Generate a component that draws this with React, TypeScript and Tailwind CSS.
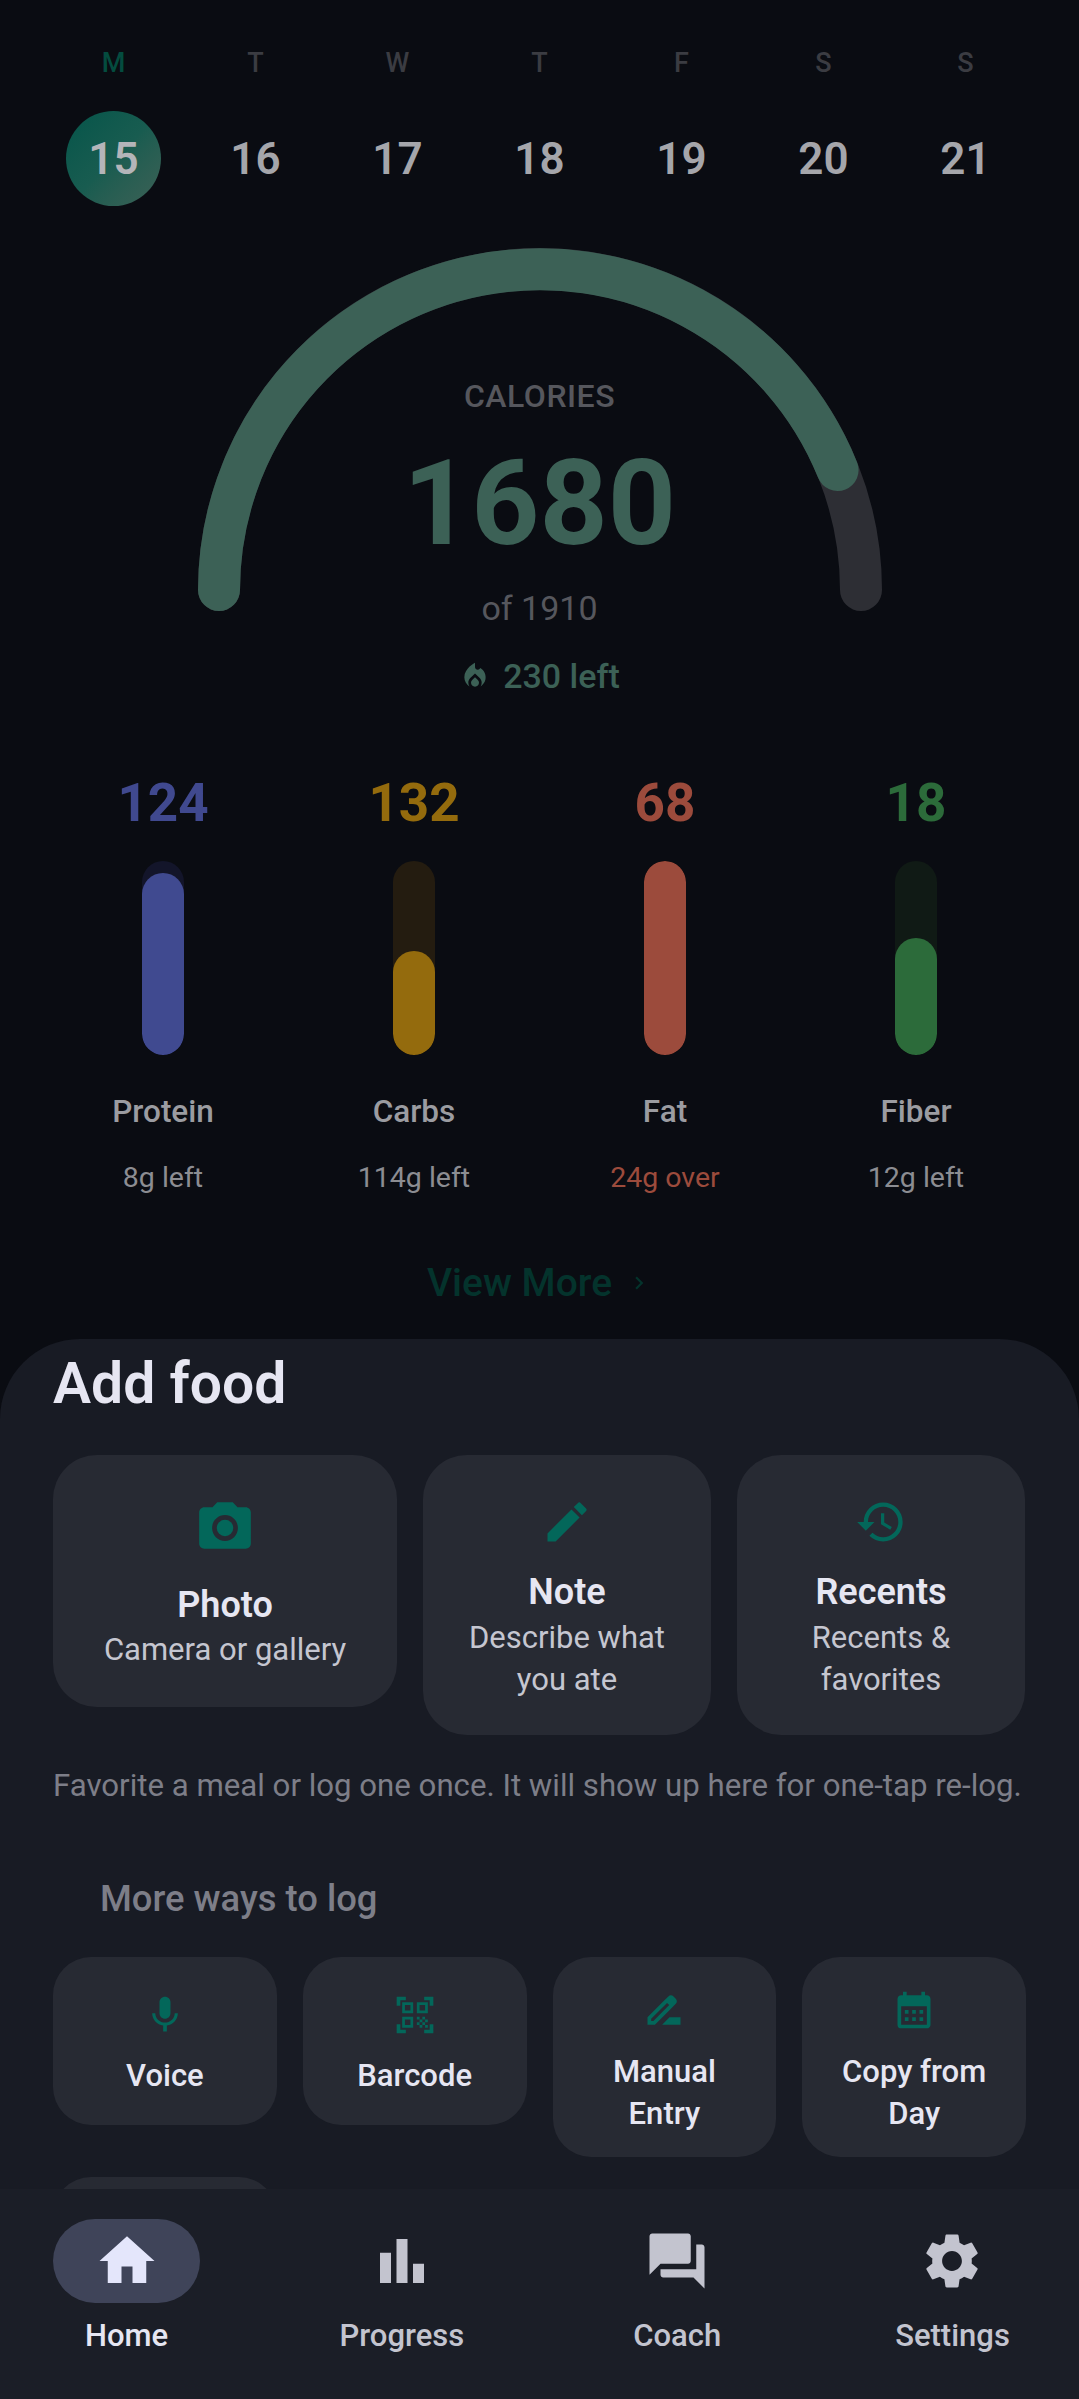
import {
  MdBarChart,
  MdCalendarMonth,
  MdCameraAlt,
  MdChevronRight,
  MdDriveFileRenameOutline,
  MdEdit,
  MdForum,
  MdHistory,
  MdHome,
  MdLocalFireDepartment,
  MdMic,
  MdQrCodeScanner,
  MdSettings,
} from "react-icons/md";

const days = [
  { letter: "M", date: 15 },
  { letter: "T", date: 16 },
  { letter: "W", date: 17 },
  { letter: "T", date: 18 },
  { letter: "F", date: 19 },
  { letter: "S", date: 20 },
  { letter: "S", date: 21 },
];

const macros = [
  { value: 124, label: "Protein", note: "8g left", text: "text-[#40498f]", fill: "bg-[#404a90]", track: "bg-[#13152a]", height: 182, over: false },
  { value: 132, label: "Carbs", note: "114g left", text: "text-[#946b0d]", fill: "bg-[#946b0d]", track: "bg-[#241c10]", height: 104, over: false },
  { value: 68, label: "Fat", note: "24g over", text: "text-[#9c4b3c]", fill: "bg-[#9c4b3c]", track: "bg-[#2a1613]", height: 194, over: true },
  { value: 18, label: "Fiber", note: "12g left", text: "text-[#2c6b3a]", fill: "bg-[#2c6b3a]", track: "bg-[#101a15]", height: 117, over: false },
];

const moreWays = [
  { label: "Voice", icon: MdMic },
  { label: "Barcode", icon: MdQrCodeScanner },
  { label: "Manual Entry", icon: MdDriveFileRenameOutline },
  { label: "Copy from Day", icon: MdCalendarMonth },
];

const navItems = [
  { label: "Home", icon: MdHome, active: true },
  { label: "Progress", icon: MdBarChart, active: false },
  { label: "Coach", icon: MdForum, active: false },
  { label: "Settings", icon: MdSettings, active: false },
];

function Gauge() {
  return (
    <svg width="726" height="384" viewBox="0 0 726 384" className="block">
      <path d="M 42 342 A 321 321 0 0 1 684 342" fill="none" stroke="#2d2e34" strokeWidth="42" strokeLinecap="round" />
      <path d="M 42 342 A 321 321 0 0 1 660.6 222" fill="none" stroke="#3c6156" strokeWidth="42" strokeLinecap="round" />
    </svg>
  );
}

export default function App() {
  return (
    <div className="w-[1079px] h-[2399px] overflow-hidden flex flex-col bg-[#0a0c12] font-['Roboto',sans-serif]">
      {/* Dimmed dashboard behind the sheet */}
      <div className="h-[1339px] shrink-0 flex flex-col items-center">
        <div className="w-[994px] mt-[43px] grid grid-cols-7">
          {days.map((d, i) => (
            <div key={d.date} className="flex flex-col items-center">
              <span className={`h-[40px] leading-[40px] text-[27px] font-medium ${i === 0 ? "text-[#044c3f]" : "text-[#3b3c42]"}`}>
                {d.letter}
              </span>
              <div
                className={`mt-[28px] w-[95px] h-[95px] rounded-full flex items-center justify-center text-[44px] font-semibold ${
                  i === 0 ? "bg-gradient-to-br from-[#03554a] via-[#185c50] to-[#3c6156] text-[#b4b5b9]" : "text-[#a5a6ab]"
                }`}
              >
                {d.date}
              </div>
            </div>
          ))}
        </div>

        <div className="relative mt-[42px] w-[726px] h-[384px]">
          <Gauge />
          <div className="absolute inset-x-0 top-[128px] flex flex-col items-center">
            <span className="text-[32px] leading-[40px] font-medium tracking-[0.5px] text-[#56575d]">CALORIES</span>
            <span className="mt-[23px] text-[119px] leading-[130px] font-bold text-[#3c6156]">1680</span>
            <span className="mt-[17px] text-[34px] leading-[44px] text-[#56575d]">of 1910</span>
          </div>
        </div>
        <div className="mt-[22px] flex items-center gap-[12px] text-[#3c6156]">
          <MdLocalFireDepartment size={32} />
          <span className="text-[34px] leading-[44px] font-medium">230 left</span>
        </div>

        <div className="mt-[76px] w-[1004px] grid grid-cols-4">
          {macros.map((m) => (
            <div key={m.label} className="flex flex-col items-center">
              <span className={`text-[53px] leading-[58px] font-bold ${m.text}`}>{m.value}</span>
              <div className={`mt-[29px] w-[42px] h-[194px] rounded-full flex flex-col justify-end overflow-hidden ${m.track}`}>
                <div className={`w-full rounded-full ${m.fill}`} style={{ height: m.height }} />
              </div>
              <span className="mt-[37px] text-[31.5px] leading-[40px] font-medium text-[#9b9ca1]">{m.label}</span>
              <span className={`mt-[26px] text-[28.5px] leading-[40px] ${m.over ? "text-[#9c4b3c]" : "text-[#8c8d92]"}`}>{m.note}</span>
            </div>
          ))}
        </div>

        <div className="mt-[60px] flex items-center gap-[14px] text-[#04332c]">
          <span className="text-[39px] leading-[50px] font-medium">View More</span>
          <MdChevronRight size={26} />
        </div>
      </div>

      {/* Add food sheet */}
      <div className="flex-1 min-h-0 overflow-hidden rounded-t-[80px] bg-[#181b24] px-[53px]">
        <h2 className="mt-[13px] text-[57px] leading-[64px] font-semibold text-[#e6e6f2]">Add food</h2>

        <div className="mt-[39px] flex gap-[26px] items-start">
          <div className="w-[344px] h-[252px] rounded-[44px] bg-[#272a33] flex flex-col items-center pt-[42px]">
            <MdCameraAlt size={62} className="text-[#03675a]" />
            <span className="mt-[24px] text-[36px] leading-[44px] font-semibold text-[#e6e6f2]">Photo</span>
            <span className="mt-[2px] text-[31px] leading-[42px] text-[#c5c6d0]">Camera or gallery</span>
          </div>
          <div className="w-[288px] h-[280px] rounded-[44px] bg-[#272a33] flex flex-col items-center pt-[41px] text-center">
            <MdEdit size={52} className="text-[#03675a]" />
            <span className="mt-[22px] text-[36px] leading-[44px] font-semibold text-[#e6e6f2]">Note</span>
            <span className="mt-[3px] text-[31px] leading-[42px] text-[#c5c6d0]">Describe what<br />you ate</span>
          </div>
          <div className="w-[288px] h-[280px] rounded-[44px] bg-[#272a33] flex flex-col items-center pt-[41px] text-center">
            <MdHistory size={52} className="text-[#03675a]" />
            <span className="mt-[22px] text-[36px] leading-[44px] font-semibold text-[#e6e6f2]">Recents</span>
            <span className="mt-[3px] text-[31px] leading-[42px] text-[#c5c6d0]">Recents &amp;<br />favorites</span>
          </div>
        </div>

        <p className="mt-[30px] text-[31.2px] leading-[42px] text-[#7d7e88] whitespace-nowrap">
          Favorite a meal or log one once. It will show up here for one-tap re-log.
        </p>

        <h3 className="mt-[70px] ml-[47px] text-[36.4px] leading-[44px] font-medium text-[#7d7e88]">More ways to log</h3>

        <div className="mt-[36px] grid grid-cols-4 gap-x-[26px] gap-y-[20px] items-start">
          {moreWays.map((w) => {
            const Icon = w.icon;
            const wrapped = w.label.length > 8;
            return (
              <div
                key={w.label}
                className={`rounded-[38px] bg-[#272a33] flex flex-col items-center text-center ${
                  wrapped ? "h-[200px] pt-[31px]" : "h-[168px] pt-[36px]"
                }`}
              >
                <Icon size={44} className="text-[#03675a]" />
                <span className={`text-[31px] leading-[42px] font-medium text-[#e6e6f2] ${wrapped ? "mt-[19px] px-[30px]" : "mt-[18px]"}`}>
                  {w.label}
                </span>
              </div>
            );
          })}
          <div className="rounded-[38px] bg-[#272a33] h-[168px]" />
        </div>
      </div>

      {/* Bottom navigation */}
      <nav className="h-[210px] shrink-0 bg-[#1b1e27] px-[53px] pt-[30px] flex justify-between">
        {navItems.map((n) => {
          const Icon = n.icon;
          return (
            <div key={n.label} className="w-[147px] flex flex-col items-center">
              <div className={`w-[147px] h-[84px] rounded-full flex items-center justify-center ${n.active ? "bg-[#3f4459]" : ""}`}>
                <Icon size={66} className={n.active ? "text-[#e4e6fb]" : "text-[#c3c4cf]"} />
              </div>
              <span className={`mt-[12px] text-[31px] leading-[42px] font-medium whitespace-nowrap ${n.active ? "text-[#e6e6f2]" : "text-[#c3c4cf]"}`}>
                {n.label}
              </span>
            </div>
          );
        })}
      </nav>
    </div>
  );
}
